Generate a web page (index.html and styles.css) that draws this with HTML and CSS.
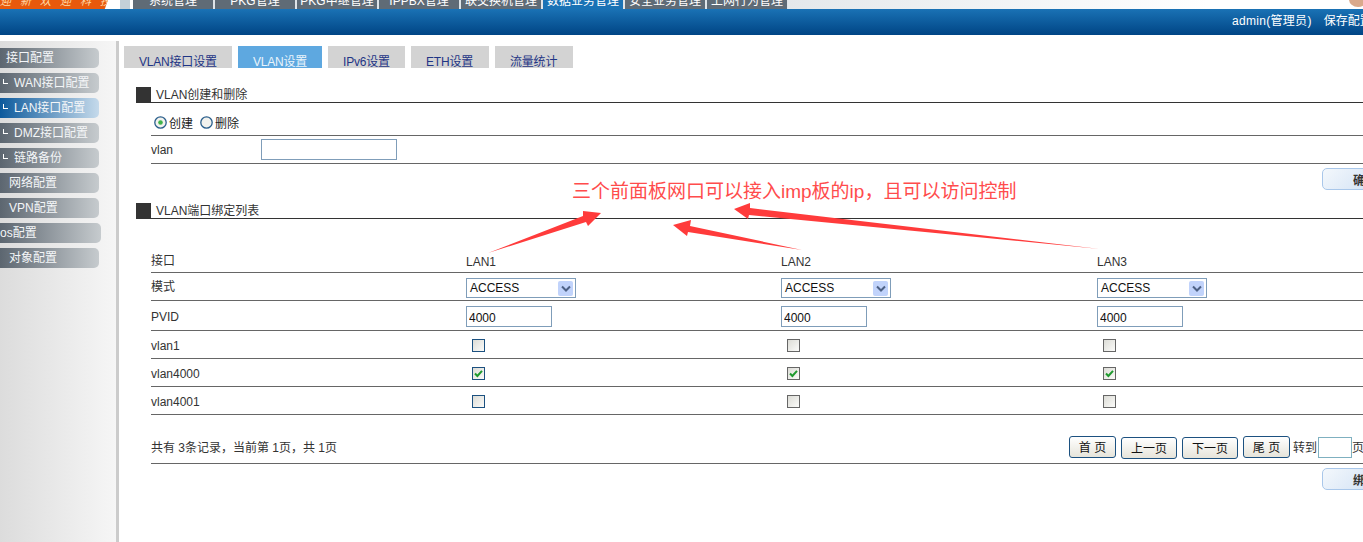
FILE: index.html
```html
<!DOCTYPE html>
<html lang="zh">
<head>
<meta charset="utf-8">
<title>VLAN设置</title>
<link rel="stylesheet" href="styles.css">
</head>
<body>
<header class="top">
  <div class="logo">迎新欢迎科技</div>
  <div class="logo-gap"></div>
  <nav class="mainnav">
    <a class="mtab">系统管理</a>
    <a class="mtab">PKG管理</a>
    <a class="mtab">PKG中继管理</a>
    <a class="mtab">IPPBX管理</a>
    <a class="mtab">联交换机管理</a>
    <a class="mtab mtab-on">数据业务管理</a>
    <a class="mtab">安全业务管理</a>
    <a class="mtab">上网行为管理</a>
  </nav>
  <div class="top-fill"><i class="top-pic"></i></div>
</header>
<div class="bar"><span class="bar-user">admin(管理员)</span><span>保存配置</span></div>
<div class="main">
  <aside class="side">
    <div class="sitem sitem-a">接口配置</div>
    <div class="sitem sitem-s"><i class="tick"></i>WAN接口配置</div>
    <div class="sitem sitem-s sitem-on"><i class="tick"></i>LAN接口配置</div>
    <div class="sitem sitem-s"><i class="tick"></i>DMZ接口配置</div>
    <div class="sitem sitem-s"><i class="tick"></i>链路备份</div>
    <div class="sitem sitem-b">网络配置</div>
    <div class="sitem sitem-b">VPN配置</div>
    <div class="sitem sitem-q">os配置</div>
    <div class="sitem sitem-b">对象配置</div>
  </aside>
  <main class="content">
    <nav class="tabs">
      <a class="tab">VLAN接口设置</a>
      <a class="tab tab-on">VLAN设置</a>
      <a class="tab">IPv6设置</a>
      <a class="tab">ETH设置</a>
      <a class="tab">流量统计</a>
    </nav>

    <h2 class="sec sec-first"><i class="sq"></i>VLAN创建和删除</h2>
    <div class="block">
      <div class="radios">
        <svg class="radio" viewBox="0 0 13 13"><circle cx="6.5" cy="6.5" r="5.7" fill="#f2f2ee" stroke="#2b5f8c" stroke-width="1.3"/><circle cx="6.5" cy="6.5" r="2.3" fill="#3fb34a"/></svg><span class="rlabel">创建</span>
        <svg class="radio radio-2" viewBox="0 0 13 13"><circle cx="6.5" cy="6.5" r="5.7" fill="#f2f2ee" stroke="#2b5f8c" stroke-width="1.3"/></svg><span class="rlabel">删除</span>
      </div>
      <div class="vlanrow"><label class="vlabel">vlan</label><input class="txt txt-vlan" type="text"></div>
      <div class="actions"><button class="blue">确定</button></div>
    </div>

    <h2 class="sec sec-second"><i class="sq"></i>VLAN端口绑定列表</h2>
    <div class="block">
      <div class="row row-head"><span class="h0">接口</span><span>LAN1</span><span>LAN2</span><span>LAN3</span></div>
      <div class="row row-mode"><span class="h0">模式</span>
        <div class="sel"><span>ACCESS</span><i class="selbtn"><svg viewBox="0 0 10 7" width="10" height="7"><path d="M1 1.5 5 5.5 9 1.5" fill="none" stroke="#4d6185" stroke-width="2"/></svg></i></div>
        <div class="sel"><span>ACCESS</span><i class="selbtn"><svg viewBox="0 0 10 7" width="10" height="7"><path d="M1 1.5 5 5.5 9 1.5" fill="none" stroke="#4d6185" stroke-width="2"/></svg></i></div>
        <div class="sel"><span>ACCESS</span><i class="selbtn"><svg viewBox="0 0 10 7" width="10" height="7"><path d="M1 1.5 5 5.5 9 1.5" fill="none" stroke="#4d6185" stroke-width="2"/></svg></i></div>
      </div>
      <div class="row row-pvid"><span class="h0">PVID</span>
        <div><input class="txt txt-pvid" type="text" value="4000"></div>
        <div><input class="txt txt-pvid" type="text" value="4000"></div>
        <div><input class="txt txt-pvid" type="text" value="4000"></div>
      </div>
      <div class="row row-c"><span>vlan1</span>
        <i class="cb cb-blue"></i><i class="cb"></i><i class="cb"></i>
      </div>
      <div class="row row-c"><span>vlan4000</span>
        <i class="cb cb-blue"><svg viewBox="0 0 11 11"><path d="M2 5.5 4.4 8 9 2.8" fill="none" stroke="#1f9a2e" stroke-width="2"/></svg></i>
        <i class="cb"><svg viewBox="0 0 11 11"><path d="M2 5.5 4.4 8 9 2.8" fill="none" stroke="#1f9a2e" stroke-width="2"/></svg></i>
        <i class="cb"><svg viewBox="0 0 11 11"><path d="M2 5.5 4.4 8 9 2.8" fill="none" stroke="#1f9a2e" stroke-width="2"/></svg></i>
      </div>
      <div class="row row-c"><span>vlan4001</span>
        <i class="cb cb-blue"></i><i class="cb"></i><i class="cb"></i>
      </div>
      <div class="foot">
        <span>共有 3条记录，当前第 1页，共 1页</span>
        <div class="pager">
          <button class="pg pg-s">首 页</button>
          <button class="pg pg-l pg-low">上一页</button>
          <button class="pg pg-l pg-low">下一页</button>
          <button class="pg pg-s">尾 页</button>
          <span class="goto">转到</span><input class="txt txt-go" type="text"><span class="pgw">页</span>
        </div>
      </div>
      <div class="actions"><button class="blue">绑定</button></div>
    </div>
  </main>
</div>

<div class="note">三个前面板网口可以接入imp板的ip，且可以访问控制</div>
<svg class="arrows" viewBox="0 0 1363 542" width="1363" height="542">
  <polygon points="488,253 583,216 583,211 601,213 588,226 586,222" fill="#ff3b3b"/>
  <polygon points="802,250 690,226 691,220 673,225 687,236 688,232" fill="#ff3b3b"/>
  <polygon points="1100,249 750,208 750,203 734,209 748,219 749,215" fill="#ff3b3b"/>
</svg>
</body>
</html>
```

FILE: styles.css
```css
* { box-sizing: border-box; }
html, body { margin: 0; padding: 0; }
body {
  width: 1363px;
  height: 542px;
  overflow: hidden;
  position: relative;
  background: #fff;
  color: #333;
  font: 12px/16px "Liberation Sans", "Noto Sans CJK SC", sans-serif;
}
i { display: block; font-style: normal; }

/* top strip (page is scrolled, so it is cut off) */
.top { display: flex; height: 9px; overflow: hidden; }
.logo {
  width: 108px;
  background: #e8590c;
  color: #ffd9a8;
  font-size: 11px;
  font-style: italic;
  line-height: 3px;
  letter-spacing: 9px;
  white-space: nowrap;
  overflow: hidden;
  clip-path: polygon(0 0, 100% 0, 97% 100%, 0 100%);
}
.logo-gap {
  width: 25px;
  background: linear-gradient(90deg, #fff 0 12px, #c4d0d8 12px 22px, #fff 22px);
}
.mainnav { display: flex; gap: 2px; background: #dfe4e8; border-right: 1px solid #dfe4e8; }
.mtab {
  width: 80px;
  height: 9px;
  background: #5f6b76;
  color: #fff;
  line-height: 3px;
  text-align: center;
  white-space: nowrap;
  overflow: hidden;
}
.mtab-on { background: #1a72b5; }
.top-fill {
  flex: 1;
  position: relative;
  background: linear-gradient(90deg, #e4e8eb 0, #fff 420px);
}
.top-pic {
  position: absolute;
  right: -4px;
  top: -8px;
  width: 18px;
  height: 15px;
  border-radius: 50%;
  background: #d9a98c;
}

/* blue bar */
.bar {
  display: flex;
  gap: 12px;
  height: 26px;
  padding: 4px 0 0 1232px;
  background: linear-gradient(180deg, #1a72b5, #004585);
  color: #fff;
  white-space: nowrap;
  overflow: hidden;
}
.bar-user { letter-spacing: 0.3px; }

.main { display: flex; height: 507px; }

/* sidebar */
.side {
  flex: none;
  width: 119px;
  margin-top: 6px;
  padding-top: 7px;
  border-right: 3px solid #ccc;
  background: linear-gradient(90deg, #dcdcdc, #f6f6f6);
}
.sitem {
  display: flex;
  align-items: center;
  width: 99px;
  height: 20px;
  margin-bottom: 5px;
  color: #f4f6f8;
  background: linear-gradient(90deg, #5c6670, #c6cbce);
  border-radius: 0 5px 5px 0;
  white-space: nowrap;
}
.sitem-a { padding-left: 6px; }
.sitem-s { padding-left: 3px; }
.sitem-b { padding-left: 9px; }
.sitem-q { width: 101px; }
.sitem-on { background: linear-gradient(90deg, #0d5a9c, #c5daeb); }
.tick {
  width: 5px;
  height: 5px;
  margin: 0 6px 3px 0;
  border-left: 1px solid #fff;
  border-bottom: 1px solid #fff;
}

/* content */
.content { flex: 1; min-width: 0; padding-top: 11px; overflow: hidden; }
.tabs { display: flex; gap: 6px; margin-left: 5px; height: 22px; }
.tab {
  width: 78px;
  height: 22px;
  padding: 8px 0 0 15px;
  background: #d3d3d3;
  color: #1f3585;
  letter-spacing: -0.2px;
  white-space: nowrap;
  overflow: hidden;
}
.tab:nth-child(1) { width: 108px; }
.tab:nth-child(2) { width: 84px; }
.tab:nth-child(3) { width: 77px; }
.tab-on { background: #5ea8e0; color: #eaf4fb; }

.sec {
  display: flex;
  align-items: center;
  height: 16px;
  margin: 0 0 0 17px;
  border-bottom: 1px solid #333;
  font-size: 12px;
  font-weight: normal;
}
.sec-first { margin-top: 19px; }
.sec-second { margin-top: 13px; }
.sq { width: 15px; height: 16px; margin-right: 5px; background: #333; }

.block { margin-left: 32px; }
.radios {
  display: flex;
  align-items: center;
  height: 33px;
  padding: 7px 0 0 3px;
  border-bottom: 1px solid #666;
}
.radio { width: 13px; height: 13px; margin-right: 2px; margin-top: -1px; }
.radio-2 { margin-left: 7px; }
.rlabel { color: #222; margin-top: 3px; }
.vlanrow {
  display: flex;
  align-items: center;
  height: 28px;
  border-bottom: 1px solid #666;
}
.vlabel { width: 110px; }
.txt {
  display: block;
  margin: 0;
  padding: 1px 2px;
  border: 1px solid #7f9db9;
  background: #fff;
  color: #111;
  font: 12px "Liberation Sans", sans-serif;
  outline: none;
}
.txt-vlan { width: 136px; height: 21px; }
.txt-pvid { width: 86px; height: 21px; padding-top: 3px; }
.txt-go { width: 34px; height: 21px; border-color: #7fb0c0; }

.actions { display: flex; margin-top: 4px; padding-left: 1171px; }
.blue {
  flex: none;
  width: 80px;
  height: 22px;
  padding: 0 0 0 30px;
  border: 1px solid #a9c7ea;
  border-radius: 5px;
  background: linear-gradient(135deg, #f4f8fc, #c4d9f2);
  color: #333;
  font: bold 12px "Liberation Sans", "Noto Sans CJK SC", sans-serif;
  text-align: left;
  white-space: nowrap;
}

.row {
  display: grid;
  grid-template-columns: 315px 315px 316px 1fr;
  align-items: center;
  border-bottom: 1px solid #666;
}
.row-head { height: 54px; align-items: end; padding-bottom: 2px; }
.row-head .h0 { margin-bottom: 1px; }
.row-mode { height: 28px; padding-top: 3px; }
.row-mode .h0 { margin-top: -3px; }
.row-pvid { height: 30px; padding-top: 2px; }
.row-c { height: 28px; padding-top: 2px; }

.sel {
  display: flex;
  align-items: center;
  justify-content: space-between;
  width: 110px;
  height: 20px;
  padding: 0 2px 0 3px;
  border: 1px solid #7f9db9;
  color: #111;
}
.selbtn {
  display: flex;
  align-items: center;
  justify-content: center;
  width: 15px;
  height: 15px;
  border-radius: 2px;
  background: #c1d3fb;
}
.cb {
  width: 13px;
  height: 13px;
  margin-left: 6px;
  border: 1px solid #666;
  background: linear-gradient(135deg, #dcdcd6, #fbfbf9);
}
.cb svg { display: block; width: 11px; height: 11px; }
.cb-blue { border-color: #1c5180; }

.foot {
  display: flex;
  align-items: center;
  height: 49px;
  padding-top: 17px;
  border-bottom: 1px solid #666;
  white-space: nowrap;
}
.pager { display: flex; align-items: center; margin-left: auto; margin-right: -1px; }
.pg {
  flex: none;
  height: 22px;
  margin: 0 5px 0 0;
  padding: 0;
  border: 1px solid #1c5180;
  border-radius: 3px;
  background: linear-gradient(180deg, #fff, #e6e4da);
  color: #111;
  font: 12px "Liberation Sans", "Noto Sans CJK SC", sans-serif;
}
.pg-s { width: 47px; margin-top: -2px; }
.pg-l { width: 56px; }
.pg-s:nth-child(4) { margin-right: 3px; }
.goto { width: 25px; }
.pgw { width: 12px; }

/* hand-drawn annotation on top of the screenshot */
.note {
  position: absolute;
  left: 572px;
  top: 180px;
  color: #ff4c4c;
  font: 19px/24px "Liberation Sans", "Noto Sans CJK SC", sans-serif;
  white-space: nowrap;
}
.arrows { position: absolute; left: 0; top: 0; pointer-events: none; }
```
